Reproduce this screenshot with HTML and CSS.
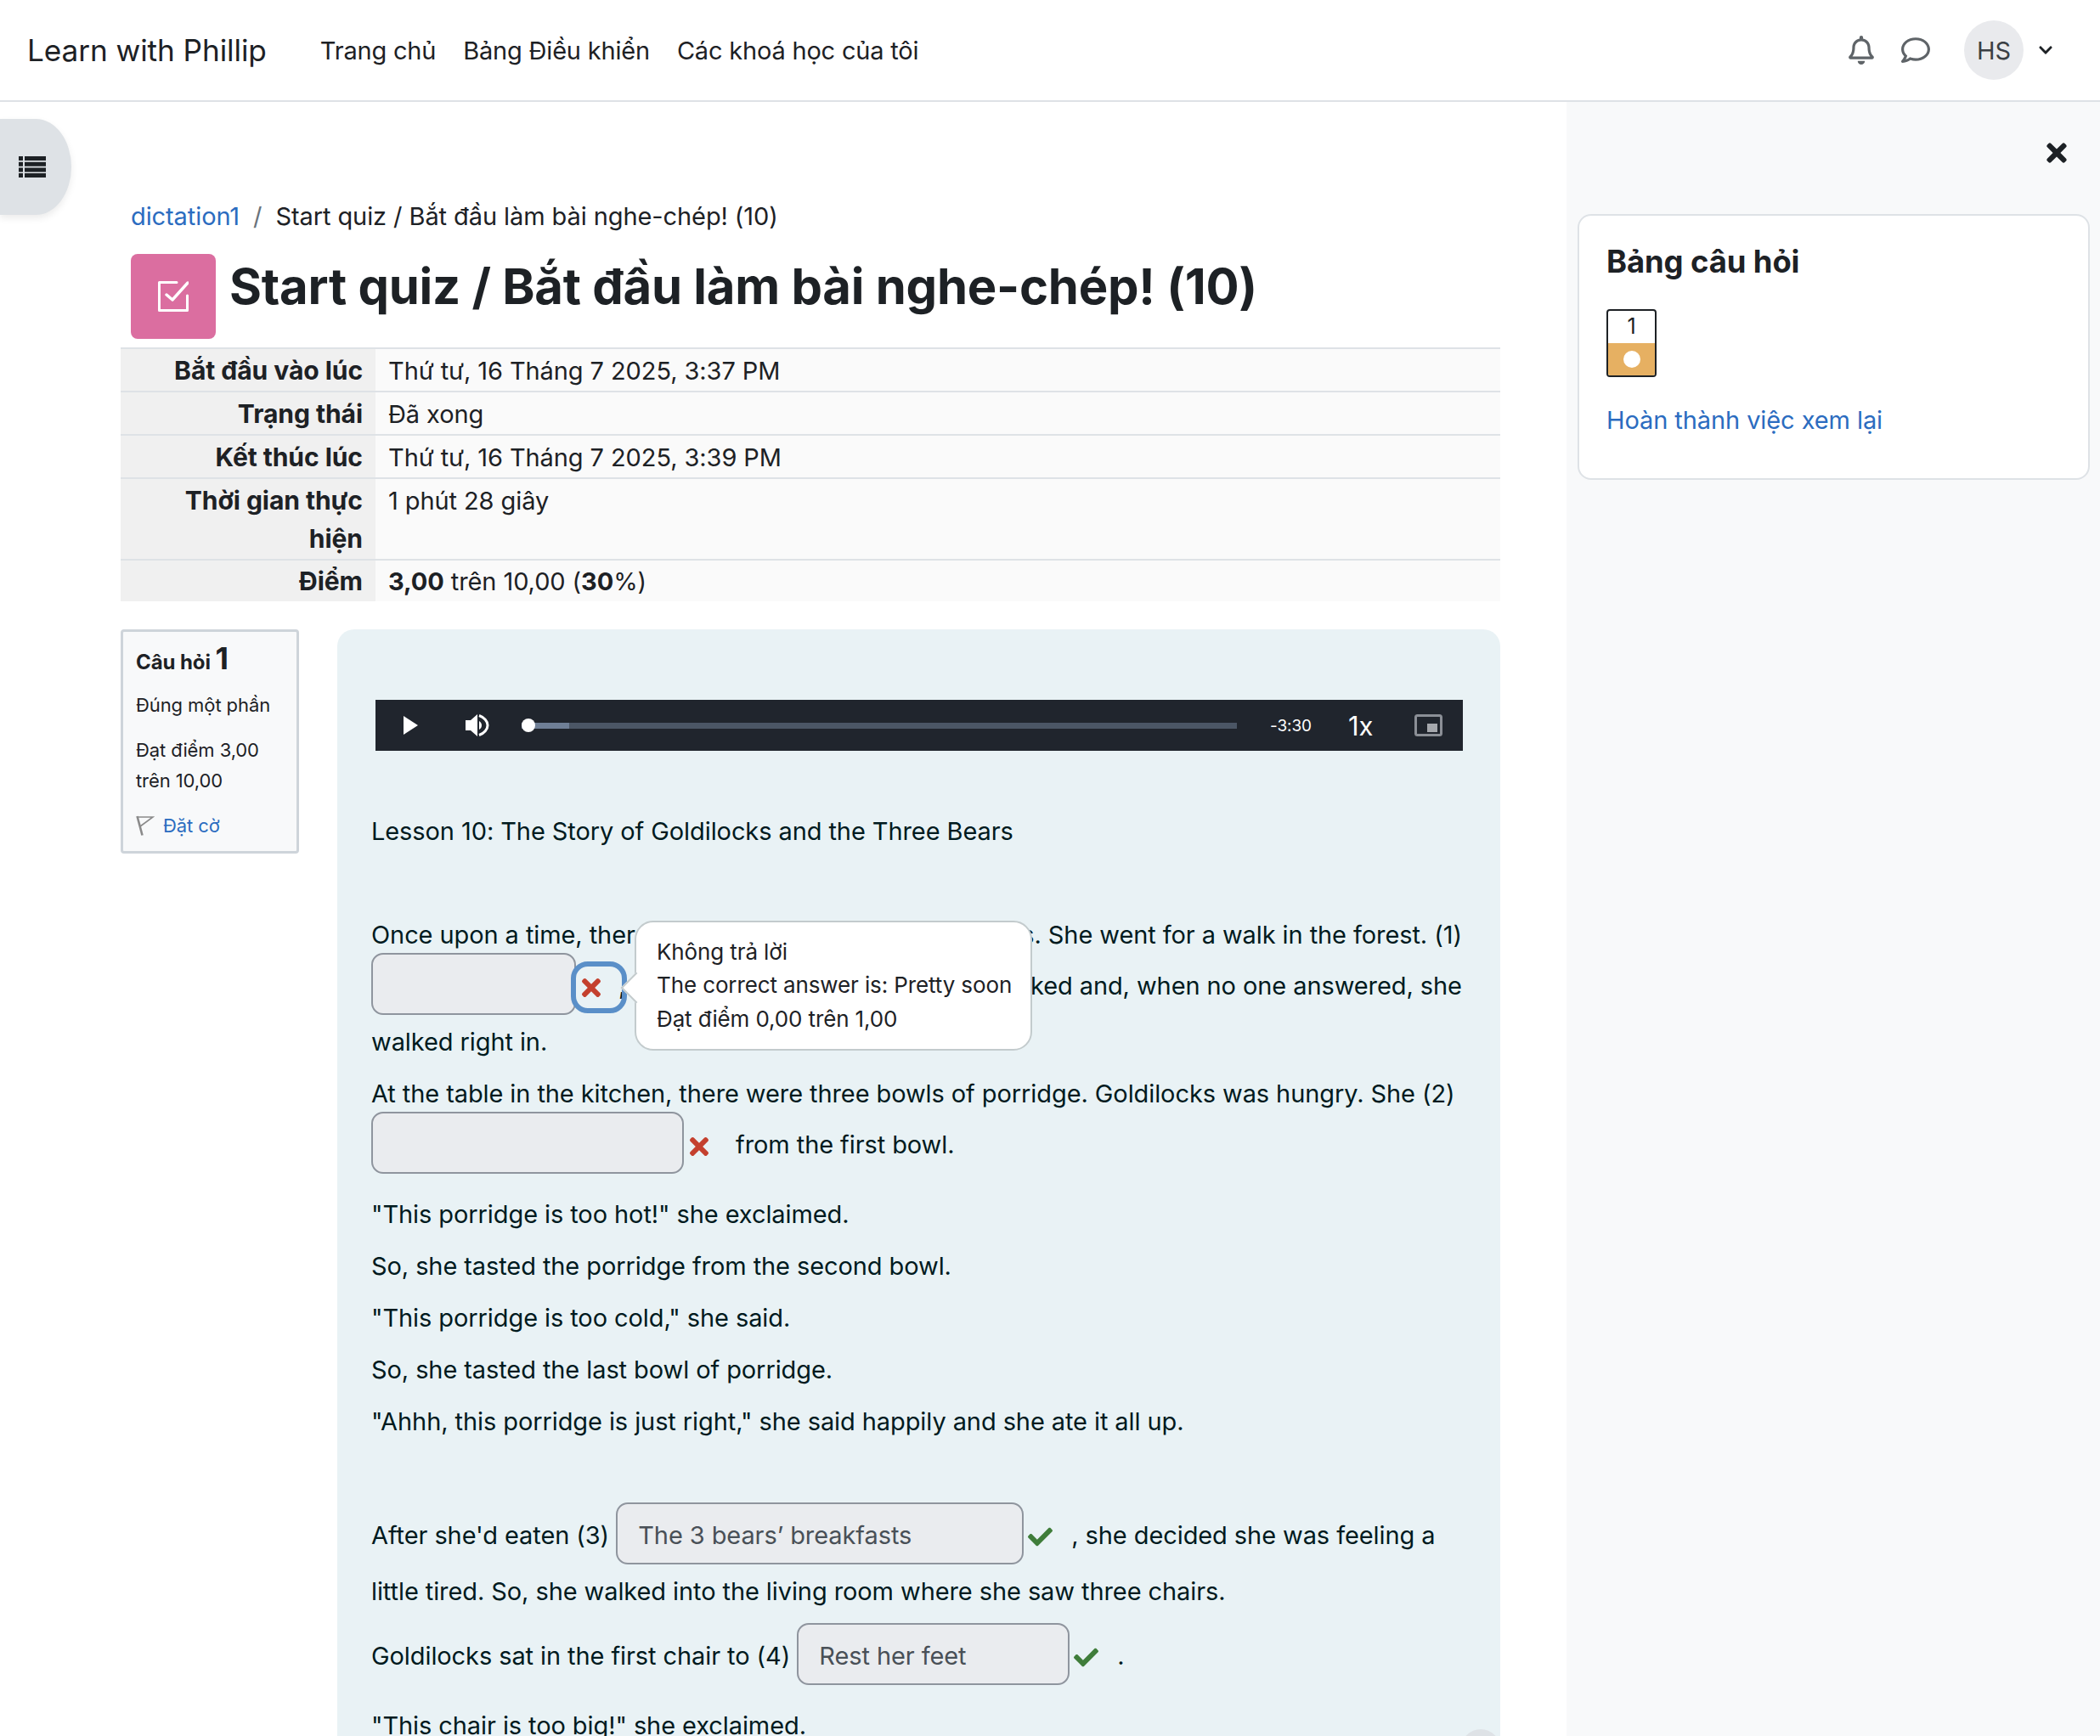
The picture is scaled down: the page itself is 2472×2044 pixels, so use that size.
FILE: index.html
```html
<!DOCTYPE html>
<html lang="vi">

<head>
  <meta charset="UTF-8" />
  <meta name="viewport" content="width=device-width, initial-scale=1.0" />
  <title>Start quiz / Bắt đầu làm bài nghe-chép! (10)</title>
  <link rel="stylesheet" href="styles.css">
</head>

<body>
  <nav class="navbar">
    <a class="brand">Learn with Phillip</a>
    <ul class="nav-links">
      <li>Trang chủ</li>
      <li>Bảng Điều khiển</li>
      <li>Các khoá học của tôi</li>
    </ul>
    <div class="nav-right">
      <svg class="nav-icon bell" viewBox="0 0 448 512"><path d="M439.39 362.29c-19.32-20.76-55.47-51.99-55.47-154.29 0-77.7-54.48-139.9-127.94-155.16V32c0-17.67-14.32-32-31.98-32s-31.98 14.33-31.98 32v20.84C118.56 68.1 64.08 130.3 64.08 208c0 102.3-36.15 133.53-55.47 154.29-6 6.45-8.66 14.16-8.61 21.71.11 16.4 12.98 32 32.1 32h383.8c19.12 0 32-15.6 32.1-32 .05-7.55-2.61-15.27-8.61-21.71zM67.53 368c21.22-27.97 44.42-74.33 44.53-159.42 0-.2-.06-.38-.06-.58 0-61.86 50.14-112 112-112s112 50.14 112 112c0 .2-.06.38-.06.58.11 85.1 23.31 131.46 44.53 159.42H67.53zM224 512c35.32 0 63.97-28.65 63.97-64H160.03c0 35.35 28.65 64 63.97 64z"/></svg>
      <svg class="nav-icon comment" viewBox="0 0 512 512"><path d="M256 32C114.6 32 0 125.1 0 240c0 47.6 19.9 91.2 52.9 126.3C38 405.7 7 439.1 6.5 439.5c-6.6 7-8.4 17.2-4.6 26S14.4 480 24 480c61.5 0 110-25.7 139.1-46.3C192 442.8 223.2 448 256 448c141.4 0 256-93.1 256-208S397.4 32 256 32zm0 368c-26.7 0-53.1-4.1-78.4-12.1l-22.7-7.2-19.5 13.8c-14.3 10.1-33.9 21.4-57.5 29 7.3-12.1 14.4-25.7 19.9-40.2l10.6-28.1-20.6-21.8C69.7 314.1 48 282.2 48 240c0-88.2 93.3-160 208-160s208 71.8 208 160-93.3 160-208 160z"/></svg>
      <div class="avatar">HS</div>
      <svg class="chevron" viewBox="0 0 448 512"><path d="M207.029 381.476L12.686 187.132c-9.373-9.373-9.373-24.569 0-33.941l22.667-22.667c9.357-9.357 24.522-9.375 33.901-.04L224 284.505l154.745-154.021c9.379-9.335 24.544-9.317 33.901.04l22.667 22.667c9.373 9.373 9.373 24.569 0 33.941L240.971 381.476c-9.373 9.372-24.569 9.372-33.942 0z"/></svg>
    </div>
  </nav>

  <div class="page">
    <button class="drawer-toggle">
      <svg viewBox="0 0 32 25"><path d="M0 0h5v5H0zM7 0h25v5H7zM0 6.700h5v5H0zM7 6.700h25v5H7zM0 13.400h5v5H0zM7 13.400h25v5H7zM0 20h5v5H0zM7 20h25v5H7z"/></svg>
    </button>

    <main class="main">
      <div class="breadcrumb">
        <a class="link">dictation1</a>
        <span class="crumb-sep">/</span>
        <span>Start quiz / Bắt đầu làm bài nghe-chép! (10)</span>
      </div>

      <header class="page-title">
        <div class="activity-icon">
          <svg viewBox="0 0 36 36"><path d="M22 1.500H1.500v33h33V17" fill="none" stroke="#fff" stroke-width="3" stroke-linecap="round" stroke-linejoin="round"/><path d="M10 16l7 6L35 2" fill="none" stroke="#fff" stroke-width="3.400" stroke-linecap="round" stroke-linejoin="round"/></svg>
        </div>
        <h1>Start quiz / Bắt đầu làm bài nghe-chép! (10)</h1>
      </header>

      <table class="summary">
        <tr><th>Bắt đầu vào lúc</th><td>Thứ tư, 16 Tháng 7 2025, 3:37 PM</td></tr>
        <tr><th>Trạng thái</th><td>Đã xong</td></tr>
        <tr><th>Kết thúc lúc</th><td>Thứ tư, 16 Tháng 7 2025, 3:39 PM</td></tr>
        <tr><th>Thời gian thực hiện</th><td>1 phút 28 giây</td></tr>
        <tr class="last-row"><th>Điểm</th><td><b>3,00</b> trên 10,00 (<b>30</b>%)</td></tr>
      </table>

      <section class="question">
        <aside class="que-info">
          <h3>Câu hỏi <span class="qno">1</span></h3>
          <p>Đúng một phần</p>
          <p class="grade">Đạt điểm 3,00 trên 10,00</p>
          <div class="flag">
            <svg viewBox="0 0 22 24"><path d="M1.500 1l6 22.500" fill="none" stroke="#8a8a8a" stroke-width="2.600"/><path d="M2 2h18L5 13" fill="none" stroke="#8a8a8a" stroke-width="1.600"/></svg>
            <a class="link">Đặt cờ</a>
          </div>
        </aside>

        <div class="formulation">
          <div class="player">
            <svg class="play" viewBox="0 0 17 22"><path d="M0 0l17 11L0 22z" fill="#fff"/></svg>
            <svg class="volume" viewBox="0 0 28 26"><path d="M0 7h6L14 0v26L6 19H0z" fill="#fff"/><path d="M16 8c2 1 3 3 3 5s-1 4-3 5z" fill="#fff"/><path d="M16 1.500c6 2 10 7 10 11.500s-4 9.500-10 11.500" fill="none" stroke="#fff" stroke-width="3"/></svg>
            <div class="track">
              <div class="buffered"></div>
              <div class="knob"></div>
            </div>
            <span class="time">-3:30</span>
            <span class="speed">1x</span>
            <svg class="pip" viewBox="0 0 33 26"><rect x="1.500" y="1.500" width="30" height="23" rx="2" fill="none" stroke="#8b8f96" stroke-width="3"/><rect x="15" y="11" width="12" height="10" fill="#a5a8ad"/></svg>
          </div>

          <p class="lesson">Lesson 10: The Story of Goldilocks and the Three Bears</p>

          <p>Once upon a time, there was a little girl named Goldilocks. She went for a walk in the forest. (1)
            <input class="blank w-1" readonly value=""><span class="mark focused"><svg class="icon-x" viewBox="0 0 352 512"><path d="M242.72 256l100.07-100.07c12.28-12.28 12.28-32.19 0-44.48l-22.24-22.24c-12.28-12.28-32.19-12.28-44.48 0L176 189.28 75.93 89.21c-12.28-12.28-32.19-12.28-44.48 0L9.21 111.45c-12.28 12.28-12.28 32.19 0 44.48L109.28 256 9.21 356.07c-12.28 12.28-12.28 32.19 0 44.48l22.24 22.24c12.28 12.28 32.2 12.28 44.48 0L176 322.72l100.07 100.07c12.28 12.28 32.2 12.28 44.48 0l22.24-22.24c12.28-12.28 12.28-32.19 0-44.48L242.72 256z"/></svg>
              <span class="popover">
                <span>Không trả lời</span>
                <span>The correct answer is: Pretty soon</span>
                <span>Đạt điểm 0,00 trên 1,00</span>
              </span>
            </span>
            , she came upon a house. She knocked and, when no one answered, she walked right in.</p>

          <p>At the table in the kitchen, there were three bowls of porridge. Goldilocks was hungry. She (2)
            <input class="blank w-2" readonly value=""><span class="mark wrong"><svg class="icon-x" viewBox="0 0 352 512"><path d="M242.72 256l100.07-100.07c12.28-12.28 12.28-32.19 0-44.48l-22.24-22.24c-12.28-12.28-32.19-12.28-44.48 0L176 189.28 75.93 89.21c-12.28-12.28-32.19-12.28-44.48 0L9.21 111.45c-12.28 12.28-12.28 32.19 0 44.48L109.28 256 9.21 356.07c-12.28 12.28-12.28 32.19 0 44.48l22.24 22.24c12.28 12.28 32.2 12.28 44.48 0L176 322.72l100.07 100.07c12.28 12.28 32.2 12.28 44.48 0l22.24-22.24c12.28-12.28 12.28-32.19 0-44.48L242.72 256z"/></svg></span>
            from the first bowl.</p>

          <p>"This porridge is too hot!" she exclaimed.</p>
          <p>So, she tasted the porridge from the second bowl.</p>
          <p>"This porridge is too cold," she said.</p>
          <p>So, she tasted the last bowl of porridge.</p>
          <p class="para-gap">"Ahhh, this porridge is just right," she said happily and she ate it all up.</p>

          <p>After she'd eaten (3)
            <input class="blank w-3" readonly value="The 3 bears’ breakfasts"><span class="mark"><svg class="icon-check" viewBox="0 0 512 512"><path d="M173.898 439.404l-166.4-166.4c-9.997-9.997-9.997-26.206 0-36.204l36.203-36.204c9.997-9.998 26.207-9.998 36.204 0L192 312.69 432.095 72.596c9.997-9.997 26.207-9.997 36.204 0l36.203 36.204c9.997 9.997 9.997 26.206 0 36.204l-294.4 294.401c-9.998 9.997-26.207 9.997-36.204-.001z"/></svg></span>
            , she decided she was feeling a little tired. So, she walked into the living room where she saw three chairs.</p>

          <p>Goldilocks sat in the first chair to (4)
            <input class="blank w-4" readonly value="Rest her feet"><span class="mark"><svg class="icon-check" viewBox="0 0 512 512"><path d="M173.898 439.404l-166.4-166.4c-9.997-9.997-9.997-26.206 0-36.204l36.203-36.204c9.997-9.998 26.207-9.998 36.204 0L192 312.69 432.095 72.596c9.997-9.997 26.207-9.997 36.204 0l36.203 36.204c9.997 9.997 9.997 26.206 0 36.204l-294.4 294.401c-9.998 9.997-26.207 9.997-36.204-.001z"/></svg></span>
            .</p>

          <p>"This chair is too big!" she exclaimed.</p>

          <div class="to-top"></div>
        </div>
      </section>
    </main>

    <aside class="drawer">
      <div class="drawer-head">
        <svg class="drawer-close" viewBox="0 0 352 512"><path d="M242.72 256l100.07-100.07c12.28-12.28 12.28-32.19 0-44.48l-22.24-22.24c-12.28-12.28-32.19-12.28-44.48 0L176 189.28 75.93 89.21c-12.28-12.28-32.19-12.28-44.48 0L9.21 111.45c-12.28 12.28-12.28 32.19 0 44.48L109.28 256 9.21 356.07c-12.28 12.28-12.28 32.19 0 44.48l22.24 22.24c12.28 12.28 32.2 12.28 44.48 0L176 322.72l100.07 100.07c12.28 12.28 32.2 12.28 44.48 0l22.24-22.24c12.28-12.28 12.28-32.19 0-44.48L242.72 256z"/></svg>
      </div>
      <div class="nav-card">
        <h3>Bảng câu hỏi</h3>
        <div class="qn-button">
          <span class="qn-num">1</span>
          <span class="qn-state"><i></i></span>
        </div>
        <a class="link">Hoàn thành việc xem lại</a>
      </div>
    </aside>
  </div>
</body>

</html>
```

FILE: styles.css
```css
* {
  box-sizing: border-box;
}

html,
body {
  margin: 0;
  padding: 0;
  height: 2044px;
  overflow: hidden;
}

body {
  font-family: Inter, "Noto Sans", sans-serif;
  font-size: 29px;
  line-height: 45px;
  letter-spacing: -0.09px;
  color: #1d2125;
  background: #fff;
}

.link {
  color: #2b6cc0;
}

/* navbar */
.navbar {
  display: flex;
  align-items: center;
  height: 120px;
  padding: 0 32px;
  border-bottom: 2px solid #dee2e6;
  background: #fff;
}

.brand {
  font-size: 35.2px;
  margin-right: 63px;
}

.nav-links {
  display: flex;
  gap: 32px;
  list-style: none;
  margin: 0;
  padding: 0;
  letter-spacing: -0.2px;
}

.nav-right {
  display: flex;
  align-items: center;
  margin-left: auto;
  padding-right: 24px;
}

.nav-icon {
  fill: #5f6468;
}

.bell {
  width: 30px;
  height: 34px;
  margin-right: 32px;
}

.comment {
  width: 34px;
  height: 34px;
  margin-right: 40px;
}

.avatar {
  display: flex;
  align-items: center;
  justify-content: center;
  width: 70px;
  height: 70px;
  border-radius: 50%;
  background: #e9eaed;
  font-size: 29px;
  color: #3a3f44;
}

.chevron {
  width: 16px;
  height: 18px;
  margin-left: 18px;
  fill: #1d2125;
}

/* page */
.page {
  position: relative;
  display: flex;
  height: 1924px;
}

.drawer-toggle {
  position: absolute;
  left: 0;
  top: 20px;
  width: 84px;
  height: 113px;
  padding: 0 0 0 22px;
  border: 0;
  border-radius: 0 50% 50% 0 / 0 50% 50% 0;
  background: #dee2e6;
  box-shadow: 0 4px 8px rgba(0, 0, 0, 0.08);
  text-align: left;
}

.drawer-toggle svg {
  display: block;
  width: 32px;
  height: 25px;
  fill: #1d2125;
}

.main {
  flex: 1;
  min-width: 0;
  padding: 112px 78px 0 142px;
}

.breadcrumb {
  display: flex;
  gap: 16px;
  padding-left: 12px;
  height: 45px;
}

.crumb-sep {
  color: #6a737b;
}

.page-title {
  display: flex;
  gap: 16px;
  margin: 22px 0 10px 12px;
}

.activity-icon {
  display: flex;
  align-items: center;
  justify-content: center;
  flex: none;
  width: 100px;
  height: 100px;
  border-radius: 8px;
  background: #db6ea0;
}

.activity-icon svg {
  width: 36px;
  height: 36px;
}

.page-title h1 {
  margin: 3px 0 0;
  font-size: 58px;
  line-height: 70px;
  letter-spacing: -0.25px;
  font-weight: 700;
}

/* summary table */
.summary {
  width: 100%;
  border-collapse: collapse;
  background: #fafafa;
}

.summary th,
.summary td {
  padding: 3px 15px 1px;
  border-top: 2px solid #dee2e6;
  text-align: left;
  vertical-align: top;
  font-weight: 400;
}

.summary th {
  width: 300px;
  background: #f0f0f0;
  text-align: right;
  font-size: 30.1px;
  line-height: 45px;
  font-weight: 700;
}

.summary .last-row th,
.summary .last-row td {
  padding-top: 2px;
  padding-bottom: 1px;
}

.summary b {
  font-weight: 700;
}

/* question */
.question {
  display: flex;
  gap: 45px;
  margin-top: 33px;
  align-items: flex-start;
}

.que-info {
  flex: none;
  width: 210px;
  height: 264px;
  padding: 9px 15px;
  border: 3px solid #ced4da;
  border-radius: 4px;
  background: #f8f9fa;
  font-size: 22px;
  line-height: 36px;
}

.que-info h3 {
  margin: 0 0 9.5px;
  font-size: 24px;
  line-height: 44px;
  font-weight: 700;
}

.qno {
  font-size: 36px;
}

.que-info p {
  margin: 0 0 17px;
}

.flag {
  display: flex;
  align-items: center;
  gap: 10px;
}

.flag svg {
  width: 22px;
  height: 24px;
}

.formulation {
  position: relative;
  flex: 1;
  height: 1303px;
  overflow: hidden;
  padding: 83px 40px 0 40px;
  border-radius: 20px 20px 0 0;
  background: #e9f2f5;
  color: #001a1e;
}

.formulation p {
  margin: 0 0 16px;
}

.player {
  display: flex;
  align-items: center;
  width: 1280px;
  height: 60px;
  margin: 0 0 72px 5px;
  padding-left: 33px;
  background: #20252d;
  color: #fff;
}

.play {
  width: 17px;
  height: 22px;
  margin-right: 56px;
}

.volume {
  width: 28px;
  height: 26px;
  margin-right: 38px;
}

.track {
  position: relative;
  width: 842px;
  height: 7px;
  background: #4b5665;
}

.buffered {
  width: 56px;
  height: 100%;
  background: #6f7f96;
}

.knob {
  position: absolute;
  left: 0;
  top: -5px;
  width: 16px;
  height: 16px;
  border-radius: 50%;
  background: #fff;
}

.time {
  margin-left: 39px;
  width: 92px;
  font-size: 19px;
}

.speed {
  width: 78px;
  font-size: 31px;
}

.pip {
  width: 33px;
  height: 26px;
}

.lesson {
  margin-bottom: 77px !important;
}

.para-gap {
  margin-bottom: 74px !important;
}

/* filled-in blanks */
.blank {
  height: 73px;
  margin-top: -1px;
  margin-bottom: 9px;
  padding: 3px 24px 0;
  border: 2px solid #8f959e;
  border-radius: 14px;
  background: #eaecef;
  font: inherit;
  letter-spacing: inherit;
  color: #495057;
  vertical-align: baseline;
}

.w-1 { width: 241px; }
.w-2 { width: 368px; }
.w-3 { width: 480px; }
.w-4 { width: 321px; }

.mark {
  display: inline-flex;
  align-items: center;
  justify-content: center;
  width: 36px;
  height: 36px;
  margin-right: 12px;
  vertical-align: middle;
}

.mark.wrong {
  margin-right: 17px;
}

.mark.focused {
  position: relative;
  margin-right: 6px;
}

/* focus ring round the marker */
.mark.focused::after {
  content: "";
  position: absolute;
  left: -6px;
  right: -24px;
  top: -13px;
  bottom: -12px;
  border: 6px solid #5a8fc8;
  border-radius: 20px;
}

.icon-x {
  width: 22px;
  height: 32px;
  fill: #c4402e;
}

.icon-check {
  width: 29px;
  height: 29px;
  margin-left: 2px;
  fill: #3f7d3a;
}

.popover {
  position: absolute;
  left: 69px;
  top: -61px;
  z-index: 2;
  display: flex;
  flex-direction: column;
  justify-content: center;
  width: 468px;
  height: 153px;
  padding: 0 24px;
  border: 2px solid #c3cbcd;
  border-radius: 22px;
  background: #fff;
  font-size: 26px;
  line-height: 39.5px;
  letter-spacing: -0.12px;
  color: #1d2125;
  white-space: nowrap;
}

.popover::before {
  content: "";
  position: absolute;
  left: -13px;
  top: 64px;
  width: 24px;
  height: 24px;
  border-left: 2px solid #c3cbcd;
  border-bottom: 2px solid #c3cbcd;
  background: #fff;
  transform: rotate(45deg);
}

.to-top {
  position: absolute;
  right: 0;
  top: 1295px;
  width: 46px;
  height: 46px;
  border-radius: 50%;
  background: #dee2e6;
}

/* right drawer */
.drawer {
  flex: none;
  width: 628px;
  padding: 0 12px 0 13px;
  background: #f8f9fa;
}

.drawer-head {
  display: flex;
  justify-content: flex-end;
  height: 132px;
  padding: 43px 27px 0 0;
}

.drawer-close {
  width: 24px;
  height: 34px;
  fill: #1d2125;
}

.nav-card {
  height: 313px;
  padding: 27px 32px;
  border: 2px solid #dee2e6;
  border-radius: 16px;
  background: #fff;
}

.nav-card h3 {
  margin: 0 0 29px;
  font-size: 36.4px;
  line-height: 54px;
  font-weight: 700;
}

.qn-button {
  display: flex;
  flex-direction: column;
  width: 59px;
  height: 80px;
  margin-bottom: 28px;
  overflow: hidden;
  border: 2px solid #1d2125;
  border-radius: 4px;
}

.qn-num {
  height: 38px;
  font-size: 25px;
  line-height: 36px;
  text-align: center;
}

.qn-state {
  display: flex;
  align-items: center;
  justify-content: center;
  flex: 1;
  background: #e6b062;
}

.qn-state i {
  width: 20px;
  height: 20px;
  border-radius: 50%;
  background: #fff;
}
```
